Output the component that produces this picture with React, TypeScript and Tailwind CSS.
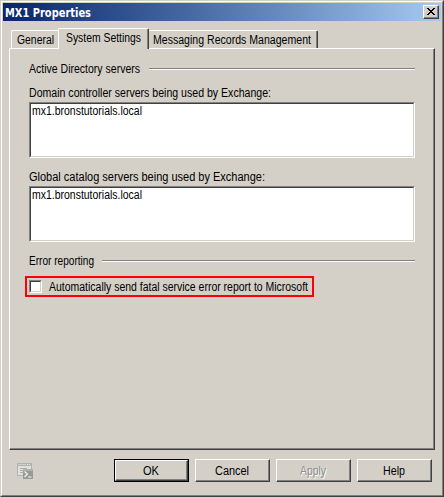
import { useLayoutEffect, useRef, type ReactNode } from "react";
import clsx from "clsx";

/* A single line of dialog text, condensed horizontally to a given width. */
function Label({ width, className, children }: { width: number; className?: string; children: ReactNode }) {
  const ref = useRef<HTMLSpanElement>(null);
  useLayoutEffect(() => {
    const el = ref.current;
    if (!el) return;
    el.style.transform = "none";
    el.style.transform = `scaleX(${width / el.getBoundingClientRect().width})`;
  }, [width]);
  return (
    <span className={clsx("block h-[14px] leading-[14px]", className)} style={{ width }}>
      <span ref={ref} className="inline-block origin-left whitespace-nowrap align-top">
        {children}
      </span>
    </span>
  );
}

function Rule() {
  return <div className="h-[2px] flex-1 border-t border-b border-t-[#808080] border-b-white" />;
}

const raised = "border border-t-white border-l-white border-r-[#404040] border-b-[#404040]";
const raisedInner = "h-full border-r border-b border-[#808080]";
const sunken = "border border-t-[#808080] border-l-[#808080] border-r-white border-b-white";
const sunkenInner = "h-full border border-t-[#404040] border-l-[#404040] border-r-[#d4d0c8] border-b-[#d4d0c8] bg-white";

function ServerList({ server }: { server: string }) {
  return (
    <div className={clsx("h-[56px] w-[386px]", sunken)}>
      <div className={clsx("pl-[1px]", sunkenInner)}>
        <Label width={110}>{server}</Label>
      </div>
    </div>
  );
}

function DialogButton({ label, width, primary, disabled }: { label: string; width: number; primary?: boolean; disabled?: boolean }) {
  return (
    <button disabled={disabled} className={clsx("h-[23px] w-[75px]", primary && "border border-black")}>
      <span className={clsx("block h-full", raised)}>
        <span className={clsx("flex items-start justify-center", raisedInner, primary ? "pt-[3px]" : "pt-[4px]")}>
          <Label width={width} className={disabled ? "text-[#8b8b89] [text-shadow:1px_1px_0_#fff]" : undefined}>
            {label}
          </Label>
        </span>
      </span>
    </button>
  );
}

function ScriptIcon() {
  return (
    <svg width="16" height="16" viewBox="0 0 16 16" shapeRendering="crispEdges">
      <path d="M0 0h15v13H0z" fill="#b2b2b0" />
      <path d="M1 3h13v9H1z" fill="#e0e0dd" />
      <path d="M1 1h8v1H1z" fill="#cfcfcc" />
      <path d="M10 1h1v1h-1zM12 1h1v1h-1z" fill="#eeeeec" />
      <path d="M3 5h7v1H3zM3 7h3v1H3zM3 9h3v1H3z" fill="#adadab" />
      <path d="M6 7h10v9H6z" fill="#999997" />
      <path d="M6 6h10v2H6z" fill="#b0b0ae" />
      <path d="M7.5 8.5l3 2.5-3 3M11 14h3.5" fill="none" stroke="#f3f3f1" strokeWidth="1.2" shapeRendering="auto" />
    </svg>
  );
}

export default function App() {
  return (
    <div className="h-[497px] w-[444px] border border-t-[#d4d0c8] border-l-[#d4d0c8] border-r-[#404040] border-b-[#404040] bg-[#d4d0c8] font-['Liberation_Sans',Arial,sans-serif] text-[12px] text-black">
      <div className="flex h-full flex-col border border-t-white border-l-white border-r-[#808080] border-b-[#808080] p-px">
        <header className="flex h-[18px] shrink-0 items-center justify-between bg-linear-to-r from-[#0a246a] to-[#a6caf0] pr-[2px] pl-[2px]">
          <Label width={86} className="mt-px font-['DejaVu_Sans_Condensed','DejaVu_Sans',sans-serif] text-[11.5px] font-bold text-white">
            MX1 Properties
          </Label>
          <button aria-label="Close" className={clsx("h-[14px] w-[16px] bg-[#d4d0c8]", raised)}>
            <span className={clsx("flex items-start pt-[2px] pl-[3px]", raisedInner)}>
              <svg width="8" height="7" viewBox="0 0 8 7" shapeRendering="crispEdges">
                <path d="M0 0h2v1H0zM6 0h2v1H6zM1 1h2v1H1zM5 1h2v1H5zM2 2h4v1H2zM3 3h2v1H3zM2 4h4v1H2zM1 5h2v1H1zM5 5h2v1H5zM0 6h2v1H0zM6 6h2v1H6z" />
              </svg>
            </span>
          </button>
        </header>

        <nav className="mt-[7px] ml-[8px] flex h-[20px] shrink-0 items-end">
          <div className="h-[18px] w-[47px] rounded-tl-[2px] border-t border-l border-white pt-[2px] pl-[5px]">
            <Label width={37}>General</Label>
          </div>
          <div className="z-10 -mb-px h-[21px] w-[91px] rounded-t-[2px] border-t border-r border-l border-t-white border-r-[#404040] border-l-white bg-[#d4d0c8]">
            <div className="h-full border-r border-[#808080] pt-[2px] pl-[7px]">
              <Label width={75}>System Settings</Label>
            </div>
          </div>
          <div className="h-[18px] w-[169px] rounded-tr-[2px] border-t border-r border-t-white border-r-[#404040]">
            <div className="h-full border-r border-[#808080] pt-[2px] pl-[4px]">
              <Label width={158}>Messaging Records Management</Label>
            </div>
          </div>
        </nav>

        <main className={clsx("ml-[6px] h-[402px] w-[426px] shrink-0", raised)}>
          <div className={clsx("flex flex-col pl-[15px]", raisedInner)}>
            <div className="mt-[13px] ml-[4px] flex h-[14px] w-[386px] items-center gap-[9px]">
              <Label width={111}>Active Directory servers</Label>
              <Rule />
            </div>
            <div className="mt-[10px] ml-[4px]">
              <Label width={242}>Domain controller servers being used by Exchange:</Label>
            </div>
            <div className="mt-[2px] ml-[4px]">
              <ServerList server="mx1.bronstutorials.local" />
            </div>
            <div className="mt-[12px] ml-[4px]">
              <Label width={236}>Global catalog servers being used by Exchange:</Label>
            </div>
            <div className="mt-[2px] ml-[4px]">
              <ServerList server="mx1.bronstutorials.local" />
            </div>
            <div className="mt-[12px] ml-[4px] flex h-[14px] w-[386px] items-center gap-[8px]">
              <Label width={65}>Error reporting</Label>
              <Rule />
            </div>
            <label className="mt-[8px] flex h-[21px] w-[289px] border-2 border-[#ff0000] pt-[2px] pl-[2px]">
              <span className={clsx("block h-[13px] w-[13px]", sunken)}>
                <span className={clsx("block", sunkenInner)} />
              </span>
              <Label width={259} className="ml-[7px]">
                Automatically send fatal service error report to Microsoft
              </Label>
            </label>
          </div>
        </main>

        <footer className="mt-[9px] flex h-[23px] shrink-0 gap-[6px] pl-[14px]">
          <div className="w-[91px] pt-[4px]">
            <ScriptIcon />
          </div>
          <DialogButton label="OK" width={16} primary />
          <DialogButton label="Cancel" width={34} />
          <DialogButton label="Apply" width={26} disabled />
          <DialogButton label="Help" width={22} />
        </footer>
      </div>
    </div>
  );
}
